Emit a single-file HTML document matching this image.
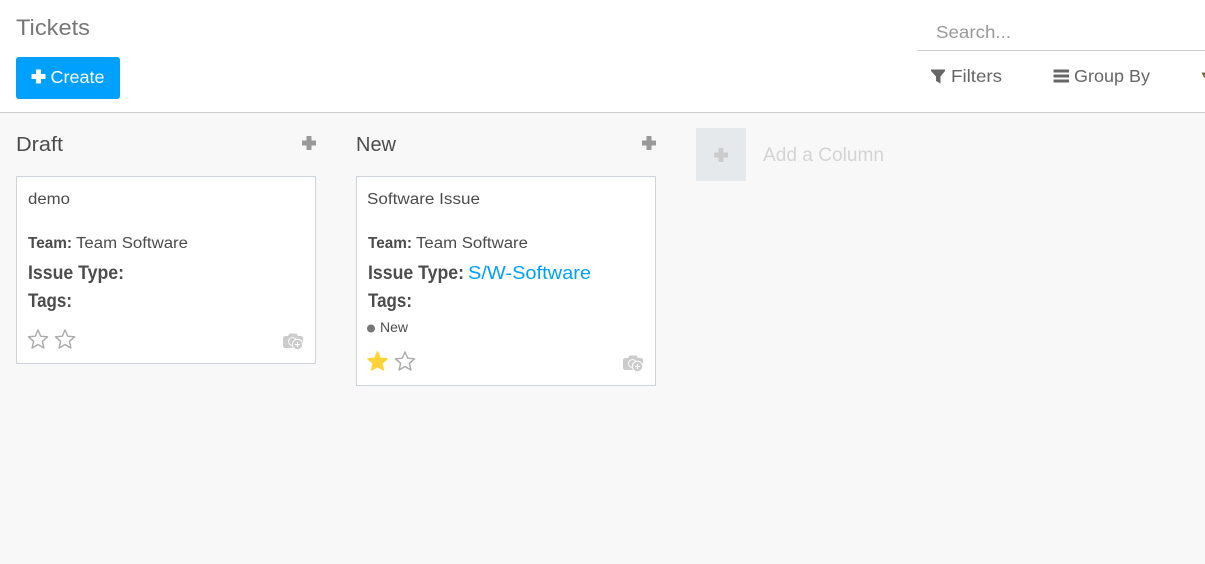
<!DOCTYPE html>
<html lang="en">
<head>
<meta charset="utf-8">
<title>Tickets</title>
<style>
html,body{margin:0;padding:0;width:1205px;height:564px;overflow:hidden;background:#fff}
svg{display:block;position:absolute;left:0;top:0}
text{font-family:"Liberation Sans",sans-serif;white-space:pre}
</style>
</head>
<body>
<svg width="1205" height="564" viewBox="0 0 1205 564" xmlns="http://www.w3.org/2000/svg">
<defs>
<path id="star" stroke-linejoin="round" d="M0-9.600 2.700-3.300 9.600-2.700 4.400 1.800 5.900 8.500 0 5 -5.900 8.500 -4.400 1.800 -9.600-2.700 -2.700-3.300Z"/>
<path id="plus" d="M-2-7H2Q2.500-7 2.500-6.500V-2.500H6.500Q7-2.500 7-2V2Q7 2.500 6.500 2.500H2.500V6.500Q2.500 7 2 7H-2Q-2.500 7-2.500 6.500V2.500H-6.500Q-7 2.500-7 2V-2Q-7-2.500-6.500-2.500H-2.500V-6.500Q-2.500-7-2-7Z"/>
<g id="cam">
<path d="M2.500 3H5L6.500 .5H13.500L15 3H17.500Q20 3 20 5.500V12.500Q20 15 17.500 15H2.500Q0 15 0 12.500V5.500Q0 3 2.500 3Z" fill="#ccc"/>
<circle cx="9.500" cy="8.500" r="4.400" fill="#fff"/>
<circle cx="9.500" cy="8.500" r="3.500" fill="#ccc"/>
<circle cx="14.500" cy="11.500" r="5.700" fill="#fff"/>
<circle cx="14.500" cy="11.500" r="4.700" fill="#ccc"/>
<path d="M14 9H15V11H17V12H15V14H14V12H12V11H14Z" fill="#fff"/>
</g>
</defs>

<rect x="0" y="112" width="1205" height="452" fill="#f8f8f8"/>
<rect x="0" y="112" width="1205" height="1" fill="#ccc"/>

<text x="16" y="35" font-size="22.500" fill="#777" textLength="74" lengthAdjust="spacingAndGlyphs">Tickets</text>

<rect x="16" y="57" width="104" height="42" rx="3" fill="#00a0ff"/>
<use href="#plus" x="38.500" y="76.500" fill="#fff"/>
<text x="50.500" y="83" font-size="17.500" fill="#fff" textLength="54" lengthAdjust="spacingAndGlyphs">Create</text>

<text x="936" y="38" font-size="17.500" fill="#999" textLength="75" lengthAdjust="spacingAndGlyphs">Search...</text>
<rect x="917" y="50" width="288" height="1" fill="#ccc"/>

<path d="M931 69.500H945V71L940.500 76.500V83.500L936 81V76.500L931 71Z" fill="#666"/>
<text x="951" y="82" font-size="17.500" fill="#666" textLength="51" lengthAdjust="spacingAndGlyphs">Filters</text>
<path d="M1053.500 69.500H1069V72.500H1053.500ZM1053.500 74.500H1069V77.500H1053.500ZM1053.500 79.500H1069V82.500H1053.500Z" fill="#666"/>
<text x="1074" y="82" font-size="17.500" fill="#666" textLength="76" lengthAdjust="spacingAndGlyphs">Group By</text>
<path d="M1201.500 72.500H1205V77.500H1204Z" fill="#7a6a3c"/>

<text x="16" y="151" font-size="20" fill="#4c4c4c" textLength="47" lengthAdjust="spacingAndGlyphs">Draft</text>
<use href="#plus" x="309" y="143" fill="#999"/>
<text x="356" y="151" font-size="20" fill="#4c4c4c" textLength="40" lengthAdjust="spacingAndGlyphs">New</text>
<use href="#plus" x="649" y="143" fill="#999"/>

<rect x="16.500" y="176.500" width="299" height="187" fill="#fff" stroke="#ced4da"/>
<text x="28" y="204" font-size="15.500" fill="#4c4c4c" textLength="42" lengthAdjust="spacingAndGlyphs">demo</text>
<text x="28" y="248" font-size="16" font-weight="bold" fill="#4c4c4c" textLength="44" lengthAdjust="spacingAndGlyphs">Team:</text>
<text x="76" y="248" font-size="15.500" fill="#4c4c4c" textLength="112" lengthAdjust="spacingAndGlyphs">Team Software</text>
<text x="28" y="279" font-size="19" font-weight="bold" fill="#4c4c4c" textLength="96" lengthAdjust="spacingAndGlyphs">Issue Type:</text>
<text x="28" y="307" font-size="19" font-weight="bold" fill="#4c4c4c" textLength="44" lengthAdjust="spacingAndGlyphs">Tags:</text>
<use href="#star" x="38" y="339.500" fill="#fff" stroke="#aaa" stroke-width="1.400"/>
<use href="#star" x="65" y="339.500" fill="#fff" stroke="#aaa" stroke-width="1.400"/>
<use href="#cam" x="283" y="333"/>

<rect x="356.500" y="176.500" width="299" height="209" fill="#fff" stroke="#ced4da"/>
<text x="367" y="204" font-size="15.500" fill="#4c4c4c" textLength="113" lengthAdjust="spacingAndGlyphs">Software Issue</text>
<text x="368" y="248" font-size="16" font-weight="bold" fill="#4c4c4c" textLength="44" lengthAdjust="spacingAndGlyphs">Team:</text>
<text x="416" y="248" font-size="15.500" fill="#4c4c4c" textLength="112" lengthAdjust="spacingAndGlyphs">Team Software</text>
<text x="368" y="279" font-size="19" font-weight="bold" fill="#4c4c4c" textLength="96" lengthAdjust="spacingAndGlyphs">Issue Type:</text>
<text x="468" y="279" font-size="18.500" fill="#00a0ff" textLength="123" lengthAdjust="spacingAndGlyphs">S/W-Software</text>
<text x="368" y="307" font-size="19" font-weight="bold" fill="#4c4c4c" textLength="44" lengthAdjust="spacingAndGlyphs">Tags:</text>
<circle cx="371" cy="328.500" r="4" fill="#777"/>
<text x="380" y="332" font-size="13.500" fill="#4c4c4c" textLength="28" lengthAdjust="spacingAndGlyphs">New</text>
<use href="#star" x="377.500" y="361.500" fill="#ffd337" stroke="#ffd337" stroke-width="1.400"/>
<use href="#star" x="405" y="361.500" fill="#fff" stroke="#aaa" stroke-width="1.400"/>
<use href="#cam" x="623" y="355"/>

<rect x="696" y="128" width="50" height="53" fill="#e6e9ec"/>
<use href="#plus" x="721" y="155" fill="#ccc"/>
<text x="763" y="161" font-size="19" fill="#d4d4d4" textLength="121" lengthAdjust="spacingAndGlyphs">Add a Column</text>
</svg>
</body>
</html>
